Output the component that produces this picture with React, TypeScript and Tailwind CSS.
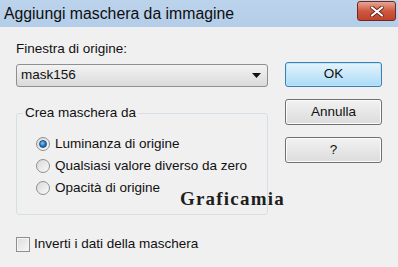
const font = { fontFamily: '"Liberation Sans", Arial, sans-serif' };

function Radio({ checked, label }: { checked?: boolean; label: string }) {
  return (
    <div className="flex h-[22px] items-center whitespace-nowrap">
      <div className="flex h-[14px] w-[14px] shrink-0 items-center justify-center rounded-full border border-[#8f8f8f] bg-gradient-to-br from-[#d9d9d9] to-[#fafafa]">
        {checked && (
          <div className="h-[8px] w-[8px] rounded-full border border-[#1a4d80] bg-[radial-gradient(circle_at_40%_35%,#7ec5f5,#1266b5_70%)]" />
        )}
      </div>
      <span className="ml-[5px] text-[13.5px] text-[#111]">{label}</span>
    </div>
  );
}

function DlgButton({ label, primary }: { label: string; primary?: boolean }) {
  return (
    <button
      className={
        primary
          ? 'h-[25px] w-[97px] rounded-[3px] border border-[#3c7fb1] bg-gradient-to-b from-[#e5f4fc] to-[#a9dbf6] text-[13.5px] text-[#111] shadow-[inset_0_0_0_1px_#bde6fd]'
          : 'h-[26px] w-[97px] rounded-[3px] border border-[#707070] bg-gradient-to-b from-[#f2f2f2] to-[#dcdcdc] text-[13.5px] text-[#111] shadow-[inset_0_0_0_1px_#fcfcfc]'
      }
    >
      {label}
    </button>
  );
}

export default function App() {
  return (
    <div className="flex h-[267px] w-[398px] flex-col bg-[#f0f0f0]" style={font}>
      {/* title bar */}
      <div className="flex h-[27px] items-center justify-between bg-gradient-to-b from-[#bcd3ec] to-[#b4cde8] pl-[4px] pr-[2px]">
        <span className="text-[15.8px] text-[#0d0d0d]">Aggiungi maschera da immagine</span>
        <div className="mb-[5px] flex h-[20px] w-[39px] items-center justify-center rounded-[3px] border border-[#6d2a1f] bg-gradient-to-b from-[#e8a493] via-[#cf5840] to-[#c2412b]">
          <svg width="14" height="11" viewBox="0 0 14 11">
            <path d="M2 1.5 L12 9.5 M12 1.5 L2 9.5" stroke="#5a2016" strokeWidth="3.6" strokeLinecap="round" />
            <path d="M2 1.5 L12 9.5 M12 1.5 L2 9.5" stroke="#ffffff" strokeWidth="2.2" strokeLinecap="round" />
          </svg>
        </div>
      </div>

      <div className="flex flex-1 pl-[16px] pr-[16px] pt-[14px]">
        {/* left column */}
        <div className="flex w-[252px] flex-col">
          <div className="text-[13.5px] leading-[15px] text-[#111]">Finestra di origine:</div>
          <div className="mt-[8px] flex h-[23px] items-center justify-between rounded-[3px] border border-[#8e8f8f] bg-gradient-to-b from-[#f3f3f3] to-[#dadada] pl-[4px] pr-[6px]">
            <span className="text-[13.5px] text-[#111]">mask156</span>
            <svg width="9" height="5" viewBox="0 0 9 5">
              <path d="M0 0 H9 L4.5 5 Z" fill="#111" />
            </svg>
          </div>

          {/* group */}
          <div className="relative mt-[26px] h-[102px] rounded-[3px] border border-[#d5dfe5] pl-[19px] pt-[19px]">
            <span className="absolute left-[6px] top-[-9px] bg-[#f0f0f0] px-[2px] text-[13.5px] leading-[16px] text-[#111]">
              Crea maschera da
            </span>
            <Radio checked label="Luminanza di origine" />
            <Radio label="Qualsiasi valore diverso da zero" />
            <Radio label="Opacità di origine" />
            <span
              className="absolute left-[163px] top-[71px] whitespace-nowrap text-[19px] font-bold tracking-[1.2px] text-[#1e1e1e]"
              style={{ fontFamily: '"Liberation Serif", "Times New Roman", serif' }}
            >
              Graficamia
            </span>
          </div>

          <div className="mt-[19px] flex items-center">
            <div className="h-[15px] w-[14px] border border-[#8f8f8f] bg-gradient-to-br from-[#dcdcdc] to-[#f8f8f8] shadow-[inset_0_0_0_1px_#f4f4f4]" />
            <span className="ml-[4px] text-[13.5px] text-[#111]">Inverti i dati della maschera</span>
          </div>
        </div>

        {/* right column */}
        <div className="ml-auto mt-[21px] flex flex-col gap-[12px]">
          <DlgButton primary label="OK" />
          <DlgButton label="Annulla" />
          <DlgButton label="?" />
        </div>
      </div>
    </div>
  );
}
